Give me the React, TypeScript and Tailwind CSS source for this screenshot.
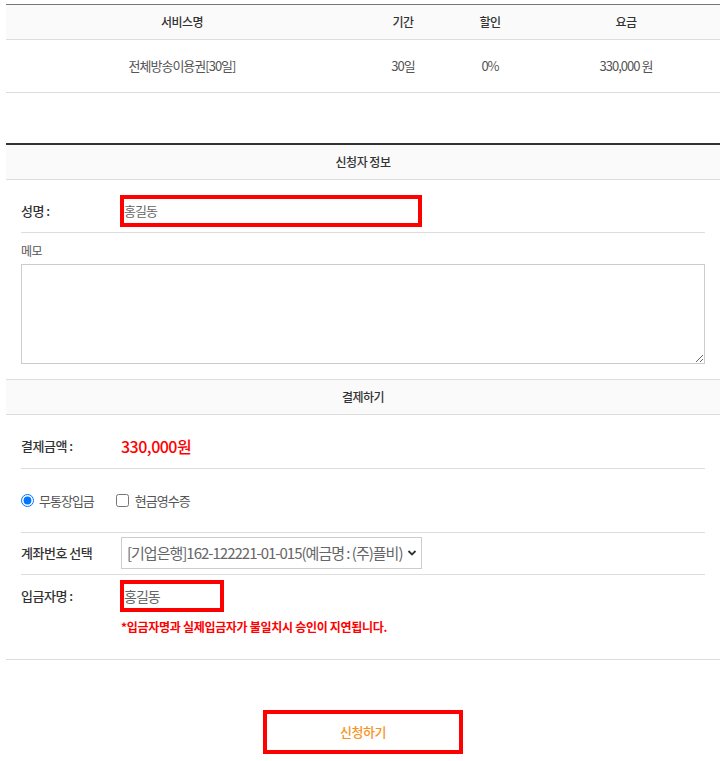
import React from "react";

function ChevronDown() {
  return (
    <svg width="10" height="10" viewBox="0 0 10 10" className="shrink-0">
      <path d="M1.5 3 L5 6.5 L8.5 3" fill="none" stroke="#333" strokeWidth="1.8" />
    </svg>
  );
}

export default function App() {
  return (
    <div className="min-h-[761px] bg-white font-['Noto_Sans_CJK_KR','Noto_Sans',sans-serif] tracking-[-0.5px] text-[#333]">
      <div className="ml-[6px] w-[714px] pt-[4px]">
        {/* Service table */}
        <div className="border-t border-[#777]">
          <div className="grid h-[35px] grid-cols-[352px_90px_84px_188px] items-center border-b border-[#ddd] bg-[#fafafa] text-center text-[12px] font-medium text-[#333]">
            <div>서비스명</div>
            <div>기간</div>
            <div>할인</div>
            <div>요금</div>
          </div>
          <div className="grid h-[53px] grid-cols-[352px_90px_84px_188px] items-center border-b border-[#ddd] text-center text-[13px] tracking-[-1px] text-[#555]">
            <div>전체방송이용권[30일]</div>
            <div>30일</div>
            <div>0%</div>
            <div>330,000 원</div>
          </div>
        </div>

        {/* Applicant info */}
        <div className="mt-[50px] border-t-2 border-[#333]">
          <div className="flex h-[35px] items-center justify-center border-b border-[#ddd] bg-[#fafafa] text-[12px] font-medium text-[#333]">
            신청자 정보
          </div>
          <div className="px-[15px]">
            <div className="flex items-center border-b border-[#ddd] pb-[5px] pt-[15px]">
              <div className="w-[99px] text-[13px] font-medium text-[#333]">성명 :</div>
              <div className="flex h-[32px] w-[302px] items-center border-4 border-[#ff0000] text-[13px] tracking-[-1px] text-[#666]">
                홍길동
              </div>
            </div>
            <div className="pt-[8px]">
              <div className="h-[19px] text-[12px] leading-[19px] text-[#555]">메모</div>
              <textarea className="mt-[4px] block h-[100px] w-full resize-y border border-[#ccc] bg-white" />
            </div>
          </div>
        </div>

        {/* Payment */}
        <div className="mt-[15px] border-b border-[#ddd]">
          <div className="flex h-[36px] items-center justify-center border-y border-[#ddd] bg-[#fafafa] text-[12px] font-medium text-[#333]">
            결제하기
          </div>
          <div className="px-[15px]">
            <div className="flex items-center border-b border-[#ddd] pb-[11px] pt-[20px]">
              <div className="w-[100px] text-[13px] font-medium text-[#333]">결제금액 :</div>
              <div className="h-[22px] text-[16px] font-medium leading-[22px] tracking-[-0.5px] text-[#ff0000]">330,000원</div>
            </div>
            <div className="flex h-[64px] items-center border-b border-[#ddd] text-[13px] tracking-[-1px] text-[#555]">
              <label className="flex items-center">
                <input type="radio" defaultChecked name="pay" className="h-[13px] w-[13px]" />
                <span className="ml-[5px]">무통장입금</span>
              </label>
              <label className="ml-[22px] flex items-center">
                <input type="checkbox" className="h-[13px] w-[13px]" />
                <span className="ml-[6px]">현금영수증</span>
              </label>
            </div>
            <div className="flex items-center border-b border-[#ddd] pb-[5px] pt-[4px]">
              <div className="w-[100px] text-[13px] font-medium text-[#333]">계좌번호 선택</div>
              <div className="flex h-[32px] w-[301px] items-center justify-between border border-[#ccc] pl-[5px] pr-[4px] text-[15px] tracking-[-1px] text-[#666]">
                <span>[기업은행]162-122221-01-015(예금명 : (주)플비)</span>
                <ChevronDown />
              </div>
            </div>
            <div className="pb-[23px] pt-[5px]">
              <div className="flex items-center">
                <div className="w-[99px] text-[13px] font-medium text-[#333]">입금자명 :</div>
                <div className="flex h-[32px] w-[104px] items-center border-4 border-[#ff0000] text-[14px] tracking-[-1px] text-[#666]">
                  홍길동
                </div>
              </div>
              <div className="ml-[100px] mt-[6px] h-[18px] text-[12px] font-bold leading-[18px] tracking-[-0.3px] text-[#ff0000]">
                *입금자명과 실제입금자가 불일치시 승인이 지연됩니다.
              </div>
            </div>
          </div>
        </div>

        {/* Submit */}
        <div className="flex justify-center pt-[50px]">
          <button className="flex h-[44px] w-[200px] items-center justify-center border-4 border-[#ff0000] text-[13px] font-medium text-[#f7941d]">
            신청하기
          </button>
        </div>
      </div>
    </div>
  );
}
